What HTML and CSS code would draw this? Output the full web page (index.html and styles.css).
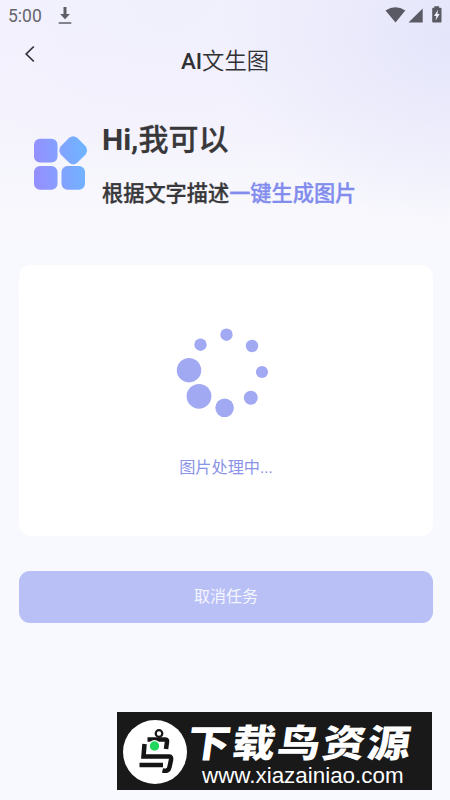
FILE: index.html
```html
<!DOCTYPE html>
<html lang="zh-CN">
<head>
<meta charset="utf-8">
<title>AI文生图</title>
<link rel="stylesheet" href="styles.css">
</head>
<body>
<div class="screen">
  <div class="status">
    <span class="time">5:00</span>
    <svg class="download" width="14" height="18" viewBox="0 0 14 18"><path d="M5.5 0h3v7h3.4L7 12.3 2.1 7h3.4zM.7 15.2h12.6v1.6H.7z" fill="#5f5f67"/></svg>
    <svg class="signals" width="58" height="20" viewBox="384 4 58 20">
      <g fill="#5a5a64"><path d="M385.5 10.6Q395.5 3.8 405.3 10.6L395.5 22.5z"/><path d="M408.5 22.5L422.7 8.6v13.9z"/><path d="M434.3 6.2h4.8v1.5h1.4q1 0 1 1v12.8q0 1-1 1h-7.300q-1 0-1-1V8.700q0-1 1-1h1.100z"/></g>
      <path d="M438.100 9.700l-4.100 6.200h2.300l-.7 4.500 4.100-6.300h-2.300z" fill="#f0f0fc"/>
    </svg>
  </div>
  <header class="header">
    <svg class="back" width="12" height="18" viewBox="0 0 12 18"><path d="M9.800 1.500L2.200 9l7.600 7.500" fill="none" stroke="#303034" stroke-width="1.700"/></svg>
    <h1 class="title"><span class="latin">AI</span>文生图</h1>
  </header>
  <section class="hero">
    <svg class="logo" width="56" height="56" viewBox="33 135 56 56">
      <defs><linearGradient id="tiles" gradientUnits="userSpaceOnUse" x1="36" y1="170" x2="86" y2="164"><stop offset="0" stop-color="#9590ff"/><stop offset="1" stop-color="#70b4ff"/></linearGradient></defs>
      <g fill="url(#tiles)"><rect x="34" y="138.700" width="23.500" height="23.700" rx="6"/><rect x="34" y="166" width="23.500" height="23.700" rx="6"/><rect x="61.500" y="166" width="23.500" height="23.700" rx="6"/><path d="M69.200 137.800Q73.200 134.500 77.200 137.800L85.600 146.200Q88.500 150.300 85.600 154.400L77.200 162.800Q73.200 166.200 69.200 162.800L60.800 154.400Q57.900 150.300 60.800 146.200z"/></g>
    </svg>
    <div class="intro">
      <p class="greeting">Hi,<span class="han">我可以</span></p>
      <p class="tagline han">根据文字描述<span class="accent">一键生成图片</span></p>
    </div>
  </section>
  <main class="card">
    <svg class="spinner" width="100" height="100" viewBox="176 322 100 100" fill="#a2a9f3">
      <circle cx="226.500" cy="334.700" r="6.200"/><circle cx="252" cy="346" r="6.200"/><circle cx="262" cy="372" r="6.100"/><circle cx="250.800" cy="397.700" r="7"/><circle cx="224.600" cy="407.800" r="9.300"/><circle cx="199" cy="396.300" r="12.400"/><circle cx="189" cy="370.200" r="12.200"/><circle cx="200.500" cy="344.700" r="6.200"/>
    </svg>
    <p class="progress">图片处理中...</p>
  </main>
  <button class="cancel">取消任务</button>
  <aside class="watermark">
    <svg class="bird" width="66" height="66" viewBox="0 0 66 66">
      <circle cx="33" cy="33" r="32" fill="#fff"/>
      <g fill="none" stroke="#151515" stroke-width="4.500"><circle cx="37" cy="14.500" r="3.300" stroke-width="2.200"/><path d="M25.500 20.500H43.500Q45.500 20.500 45 23L44 30"/><path d="M22.500 25L21.500 37.500H47.500Q49.500 37.500 49 41L47.500 48Q46.500 53 40.500 51.500"/><path d="M17.500 46H41"/></g>
      <circle cx="32.500" cy="27" r="6" fill="#fff"/><circle cx="32.500" cy="27" r="4.700" fill="#20d65b"/>
    </svg>
    <div class="brand">
      <p class="name">下载鸟资源</p>
      <p class="site">www.xiazainiao.com</p>
    </div>
  </aside>
</div>
</body>
</html>
```
FILE: styles.css
```css
* { box-sizing: border-box; }
body, p, h1 { margin: 0; }
body { font-family: Roboto, "Noto Sans CJK SC", sans-serif; }
.screen {
  width: 450px;
  height: 800px;
  overflow: hidden;
  display: flex;
  flex-direction: column;
  background:
    radial-gradient(ellipse 230px 190px at 450px 35px, #e4e5fa, rgba(236, 236, 252, 0)),
    radial-gradient(ellipse 260px 180px at 170px 0, #f0effc, rgba(240, 239, 253, 0)),
    linear-gradient(#f3f2fe 0, #f4f3fd 110px, #f8f8fd 220px, #f7f9fe 300px);
}
.status { height: 32px; display: flex; padding: 0 8px; }
.time { font-size: 17.500px; line-height: 32px; color: #65656c; width: 50px; }
.download { margin-top: 7px; }
.signals { margin: 4px 0 0 auto; }
.header { height: 60px; display: flex; justify-content: center; position: relative; }
.back { position: absolute; left: 24px; top: 13px; }
.title { font-size: 22.300px; font-weight: 350; line-height: 58px; color: #303034; }
.latin { font-weight: 500; }
.hero { height: 173px; display: flex; padding: 0 33px; }
.logo { margin-top: 43px; flex: none; }
.intro { padding: 26px 0 0 13px; white-space: nowrap; color: #38383a; font-weight: 700; }
.han { font-weight: 500; -webkit-text-stroke: 0.300px currentColor; }
.greeting { font-size: 30px; line-height: 44px; }
.tagline { font-size: 21.200px; line-height: 30px; margin-top: 17px; }
.accent { color: #818ced; }
.card { width: 414px; height: 271px; margin-left: 19px; background: #fff; border-radius: 12px; display: flex; flex-direction: column; align-items: center; padding-top: 57px; }
.progress { font-size: 16.200px; line-height: 24px; margin-top: 34px; color: #8a93e8; }
.cancel { width: 414px; height: 52px; margin: 35px 0 0 19px; padding: 0 0 4px; border: 0; border-radius: 11px; background: #b9c0f6; color: #f5f6ff; font: 16px Roboto, "Noto Sans CJK SC", sans-serif; }
.watermark { width: 315px; height: 78px; margin: 89px 0 0 117px; background: #191919; color: #fff; display: flex; }
.bird { margin: 7px 0 0 5px; flex: none; }
.brand { width: 240px; white-space: nowrap; }
.name { width: 210px; font: 900 38px/44px "Noto Sans CJK SC", sans-serif; letter-spacing: 1.800px; margin-top: 7px; transform: scaleX(1.13) skewX(-7deg); transform-origin: 0 50%; }
.site { font: 22.400px/24px "Liberation Sans", sans-serif; margin: 1px 0 0 14px; }
```
